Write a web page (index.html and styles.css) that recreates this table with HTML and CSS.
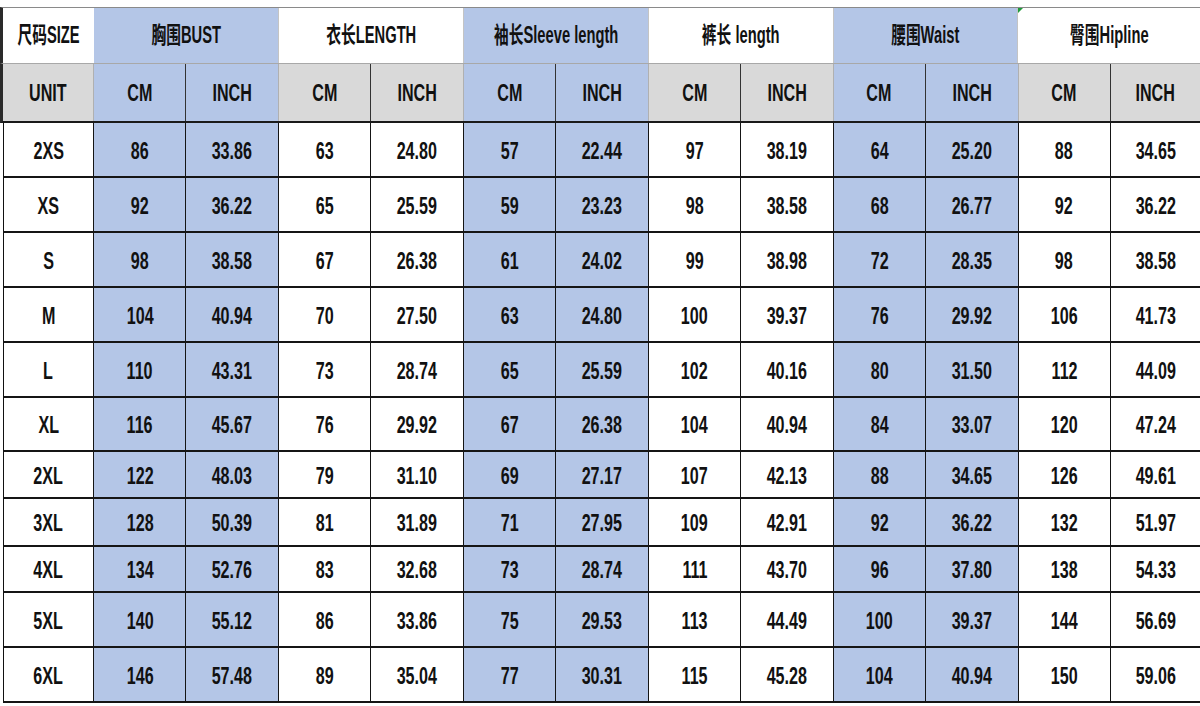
FILE: index.html
```html
<!DOCTYPE html>
<html lang="zh">
<head>
<meta charset="utf-8">
<title>Size chart</title>
<link rel="stylesheet" href="styles.css">
</head>
<body>
<div class="sheet">
  <div class="hdr1">
    <div class="c w"><span class="t">尺码SIZE</span></div>
    <div class="c b"><span class="t">胸围BUST</span></div>
    <div class="c w"><span class="t">衣长LENGTH</span></div>
    <div class="c b"><span class="t">袖长Sleeve length</span></div>
    <div class="c w"><span class="t">裤长 length</span></div>
    <div class="c b"><span class="t">腰围Waist</span></div>
    <div class="c w hip"><span class="t">臀围Hipline</span></div>
  </div>
  <div class="hdr2">
    <div class="c g"><span class="t">UNIT</span></div>
    <div class="c b in"><span class="t">CM</span></div>
    <div class="c b"><span class="t">INCH</span></div>
    <div class="c g in"><span class="t">CM</span></div>
    <div class="c g"><span class="t">INCH</span></div>
    <div class="c b in"><span class="t">CM</span></div>
    <div class="c b"><span class="t">INCH</span></div>
    <div class="c g in"><span class="t">CM</span></div>
    <div class="c g"><span class="t">INCH</span></div>
    <div class="c b in"><span class="t">CM</span></div>
    <div class="c b"><span class="t">INCH</span></div>
    <div class="c g in"><span class="t">CM</span></div>
    <div class="c g"><span class="t">INCH</span></div>
  </div>
  <div class="data">
    <div class="row"><div><span class="t">2XS</span></div><div><span class="t">86</span></div><div><span class="t">33.86</span></div><div><span class="t">63</span></div><div><span class="t">24.80</span></div><div><span class="t">57</span></div><div><span class="t">22.44</span></div><div><span class="t">97</span></div><div><span class="t">38.19</span></div><div><span class="t">64</span></div><div><span class="t">25.20</span></div><div><span class="t">88</span></div><div><span class="t">34.65</span></div></div>
    <div class="row"><div><span class="t">XS</span></div><div><span class="t">92</span></div><div><span class="t">36.22</span></div><div><span class="t">65</span></div><div><span class="t">25.59</span></div><div><span class="t">59</span></div><div><span class="t">23.23</span></div><div><span class="t">98</span></div><div><span class="t">38.58</span></div><div><span class="t">68</span></div><div><span class="t">26.77</span></div><div><span class="t">92</span></div><div><span class="t">36.22</span></div></div>
    <div class="row"><div><span class="t">S</span></div><div><span class="t">98</span></div><div><span class="t">38.58</span></div><div><span class="t">67</span></div><div><span class="t">26.38</span></div><div><span class="t">61</span></div><div><span class="t">24.02</span></div><div><span class="t">99</span></div><div><span class="t">38.98</span></div><div><span class="t">72</span></div><div><span class="t">28.35</span></div><div><span class="t">98</span></div><div><span class="t">38.58</span></div></div>
    <div class="row"><div><span class="t">M</span></div><div><span class="t">104</span></div><div><span class="t">40.94</span></div><div><span class="t">70</span></div><div><span class="t">27.50</span></div><div><span class="t">63</span></div><div><span class="t">24.80</span></div><div><span class="t">100</span></div><div><span class="t">39.37</span></div><div><span class="t">76</span></div><div><span class="t">29.92</span></div><div><span class="t">106</span></div><div><span class="t">41.73</span></div></div>
    <div class="row"><div><span class="t">L</span></div><div><span class="t">110</span></div><div><span class="t">43.31</span></div><div><span class="t">73</span></div><div><span class="t">28.74</span></div><div><span class="t">65</span></div><div><span class="t">25.59</span></div><div><span class="t">102</span></div><div><span class="t">40.16</span></div><div><span class="t">80</span></div><div><span class="t">31.50</span></div><div><span class="t">112</span></div><div><span class="t">44.09</span></div></div>
    <div class="row"><div><span class="t">XL</span></div><div><span class="t">116</span></div><div><span class="t">45.67</span></div><div><span class="t">76</span></div><div><span class="t">29.92</span></div><div><span class="t">67</span></div><div><span class="t">26.38</span></div><div><span class="t">104</span></div><div><span class="t">40.94</span></div><div><span class="t">84</span></div><div><span class="t">33.07</span></div><div><span class="t">120</span></div><div><span class="t">47.24</span></div></div>
    <div class="row"><div><span class="t">2XL</span></div><div><span class="t">122</span></div><div><span class="t">48.03</span></div><div><span class="t">79</span></div><div><span class="t">31.10</span></div><div><span class="t">69</span></div><div><span class="t">27.17</span></div><div><span class="t">107</span></div><div><span class="t">42.13</span></div><div><span class="t">88</span></div><div><span class="t">34.65</span></div><div><span class="t">126</span></div><div><span class="t">49.61</span></div></div>
    <div class="row"><div><span class="t">3XL</span></div><div><span class="t">128</span></div><div><span class="t">50.39</span></div><div><span class="t">81</span></div><div><span class="t">31.89</span></div><div><span class="t">71</span></div><div><span class="t">27.95</span></div><div><span class="t">109</span></div><div><span class="t">42.91</span></div><div><span class="t">92</span></div><div><span class="t">36.22</span></div><div><span class="t">132</span></div><div><span class="t">51.97</span></div></div>
    <div class="row"><div><span class="t">4XL</span></div><div><span class="t">134</span></div><div><span class="t">52.76</span></div><div><span class="t">83</span></div><div><span class="t">32.68</span></div><div><span class="t">73</span></div><div><span class="t">28.74</span></div><div><span class="t">111</span></div><div><span class="t">43.70</span></div><div><span class="t">96</span></div><div><span class="t">37.80</span></div><div><span class="t">138</span></div><div><span class="t">54.33</span></div></div>
    <div class="row"><div><span class="t">5XL</span></div><div><span class="t">140</span></div><div><span class="t">55.12</span></div><div><span class="t">86</span></div><div><span class="t">33.86</span></div><div><span class="t">75</span></div><div><span class="t">29.53</span></div><div><span class="t">113</span></div><div><span class="t">44.49</span></div><div><span class="t">100</span></div><div><span class="t">39.37</span></div><div><span class="t">144</span></div><div><span class="t">56.69</span></div></div>
    <div class="row"><div><span class="t">6XL</span></div><div><span class="t">146</span></div><div><span class="t">57.48</span></div><div><span class="t">89</span></div><div><span class="t">35.04</span></div><div><span class="t">77</span></div><div><span class="t">30.31</span></div><div><span class="t">115</span></div><div><span class="t">45.28</span></div><div><span class="t">104</span></div><div><span class="t">40.94</span></div><div><span class="t">150</span></div><div><span class="t">59.06</span></div></div>
  </div>
</div>
</body>
</html>
```
FILE: styles.css
```css
html, body {
  margin: 0;
  padding: 0;
  background: #ffffff;
}
body {
  font-family: "Liberation Sans", "Noto Sans CJK SC", Arial, sans-serif;
  font-weight: 700;
  color: #111111;
}
.sheet {
  width: 1200px;
  padding-top: 7px;
}
.c, .row > div {
  display: flex;
  align-items: center;
  justify-content: center;
  box-sizing: border-box;
  overflow: hidden;
}
.t {
  display: inline-block;
  white-space: nowrap;
  transform: scaleX(0.7);
  font-size: 23px;
  line-height: 1;
}
.hdr1 .t {
  transform: scaleX(0.64);
}
.w { background: #ffffff; }
.b { background: #b4c6e7; }
.g { background: #d9d9d9; }

.hdr1 {
  display: grid;
  grid-template-columns: 91px repeat(5, 1fr) 181.5px;
  height: 57px;
  box-sizing: border-box;
  border-top: 1px solid #8a8a8a;
  border-bottom: 1px solid #a8a8a8;
  border-left: 3px solid #2a2a2a;
}
.hdr1 .c {
  border-right: 1px solid #c4c4c4;
  position: relative;
}
.hdr1 .c:first-child { border-right: none; }
.hdr1 .c:last-child { border-right: none; }
.hdr1 .hip::before {
  content: "";
  position: absolute;
  left: 0;
  top: 0;
  border-top: 5px solid #1f9a3a;
  border-right: 5px solid transparent;
}
.hdr2 {
  display: grid;
  grid-template-columns: 91px repeat(11, 1fr) 89px;
  height: 59px;
  box-sizing: border-box;
  border-left: 3px solid #2a2a2a;
  border-bottom: 2px solid #1a1a1a;
}
.hdr2 .c { border-right: 1px solid #b0b0b0; padding-top: 1px; }
.hdr2 .c.in { border-right: 1px solid #333333; }
.hdr2 .c:last-child { border-right: none; }

.data {
  margin-left: 3px;
  border-left: 1px solid #111111;
}
.row {
  display: grid;
  grid-template-columns: 90px repeat(11, 1fr) 89px;
  height: 55px;
}
.row > div {
  border-right: 1px solid #151515;
  border-bottom: 2px solid #151515;
  background: #ffffff;
  padding-top: 3px;
}
.row > div:last-child { border-right: none; }
.row > div:nth-child(2),
.row > div:nth-child(3),
.row > div:nth-child(6),
.row > div:nth-child(7),
.row > div:nth-child(10),
.row > div:nth-child(11) {
  background: #b4c6e7;
}
.row:nth-child(6) { height: 54px; }
.row:nth-child(7) { height: 47px; }
.row:nth-child(8) { height: 48px; }
.row:nth-child(9) { height: 46px; }
```
